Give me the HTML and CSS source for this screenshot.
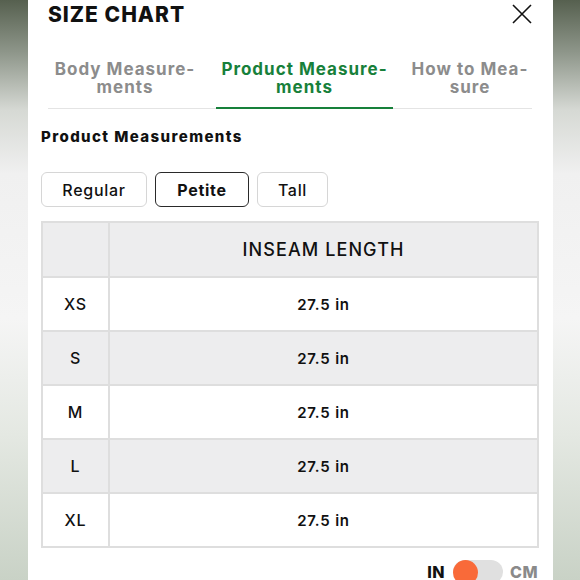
FILE: index.html
```html
<!DOCTYPE html>
<html lang="en">
<head>
<meta charset="utf-8">
<title>Size Chart</title>
<link rel="stylesheet" href="styles.css">
</head>
<body>
<div class="panel">
  <header class="head">
    <h1 class="title">SIZE CHART</h1>
    <button class="close" aria-label="Close">
      <svg width="20" height="20" viewBox="0 0 20 20"><path d="M1 1L19 19M19 1L1 19" stroke="#111" stroke-width="1.6" fill="none"/></svg>
    </button>
  </header>
  <nav class="tabs">
    <div class="tab t1">Body Measure-<br>ments</div>
    <div class="tab t2 active">Product Measure-<br>ments</div>
    <div class="tab t3">How to Mea-<br>sure</div>
  </nav>
  <h2 class="section">Product Measurements</h2>
  <div class="fits">
    <button class="fit regular">Regular</button>
    <button class="fit petite selected">Petite</button>
    <button class="fit tall">Tall</button>
  </div>
  <table class="chart">
    <tr class="hrow"><th class="size"></th><th>INSEAM LENGTH</th></tr>
    <tr><td class="size">XS</td><td>27.5 in</td></tr>
    <tr class="alt"><td class="size">S</td><td>27.5 in</td></tr>
    <tr><td class="size">M</td><td>27.5 in</td></tr>
    <tr class="alt"><td class="size">L</td><td>27.5 in</td></tr>
    <tr><td class="size">XL</td><td>27.5 in</td></tr>
  </table>
  <div class="units">
    <span class="unit on">IN</span>
    <span class="switch"><span class="knob"></span></span>
    <span class="unit off">CM</span>
  </div>
</div>
</body>
</html>
```

FILE: styles.css
```css
html, body {
  margin: 0;
  padding: 0;
  height: 580px;
  overflow: hidden;
}
body {
  background: linear-gradient(to bottom, #56604f 0%, #8e968a 9%, #d6d9d4 19%, #f0f0f0 30%, #f5f5f5 55%, #e4e8e2 75%, #c9d2c6 100%);
  font-family: Inter, "Liberation Sans", sans-serif;
  color: #111;
}
.panel {
  width: 525px;
  height: 580px;
  margin-left: 28px;
  background: #fff;
  padding: 0 14px 0 13px;
  box-sizing: border-box;
}
.head {
  display: flex;
  justify-content: space-between;
  align-items: flex-start;
  height: 30px;
}
.title {
  margin: 0 0 0 7px;
  font-size: 21px;
  line-height: 30px;
  font-weight: 800;
  letter-spacing: 1px;
}
.close {
  border: 0;
  background: none;
  padding: 0;
  margin: 4px 7px 0 0;
  width: 20px;
  height: 20px;
  display: block;
}
.close svg { display: block; }
.tabs {
  display: flex;
  margin: 30px 0 0 7px;
  width: 484px;
  border-bottom: 1px solid #e4e4e4;
}
.tab {
  flex: none;
  text-align: center;
  font-size: 17px;
  line-height: 18px;
  font-weight: 700;
  letter-spacing: 1px;
  color: #8c8c8c;
  padding-bottom: 12px;
  white-space: nowrap;
}
.t1 { width: 154px; margin-right: 14px; }
.t2 { width: 177px; margin-right: 9px; }
.t3 { width: 136px; }
.tab.active {
  color: #17803a;
  border-bottom: 2px solid #17803a;
  margin-bottom: -1px;
  padding-bottom: 11px;
}
.section {
  margin: 18px 0 0 0;
  font-size: 15px;
  line-height: 20px;
  font-weight: 800;
  letter-spacing: 1.4px;
}
.fits {
  display: flex;
  gap: 8px;
  margin-top: 25px;
}
.fit {
  height: 35px;
  box-sizing: border-box;
  background: #fff;
  border: 1px solid #d6d6d6;
  border-radius: 6px;
  font-family: Inter, "Liberation Sans", sans-serif;
  font-size: 16px;
  font-weight: 500;
  letter-spacing: 0.7px;
  color: #111;
  padding: 1px 0 0;
}
.regular { width: 106px; }
.petite { width: 94px; }
.tall { width: 71px; }
.fit.selected {
  border: 1.5px solid #2a2a2a;
  font-weight: 700;
}
.chart {
  margin-top: 14px;
  width: 498px;
  border-collapse: collapse;
  border: 2px solid #969696;
}
.chart th, .chart td {
  border: 2px solid #dedede;
  text-align: center;
  padding: 0;
  height: 52px;
}
.chart tr.hrow th {
  height: 53px;
  background: #ededee;
  font-size: 18px;
  font-weight: 500;
  letter-spacing: 1.1px;
}
.chart .size {
  width: 65px;
  font-size: 16px;
  font-weight: 500;
}
.chart td {
  font-size: 15px;
  font-weight: 600;
  letter-spacing: 0.8px;
}
.chart tr.alt td { background: #ededee; }
.units {
  display: flex;
  justify-content: flex-end;
  align-items: center;
  margin-top: 12px;
  padding-right: 1px;
}
.unit {
  font-size: 16px;
  font-weight: 800;
  letter-spacing: 0.5px;
  line-height: 20px;
}
.unit.on { color: #111; }
.unit.off { color: #8a8a8a; }
.switch {
  width: 50px;
  height: 24px;
  border-radius: 12px;
  background: #e0e0e0;
  margin: 0 7px 0 8px;
  display: flex;
  align-items: center;
}
.knob {
  width: 25px;
  height: 25px;
  border-radius: 50%;
  background: #f96a39;
}
```
